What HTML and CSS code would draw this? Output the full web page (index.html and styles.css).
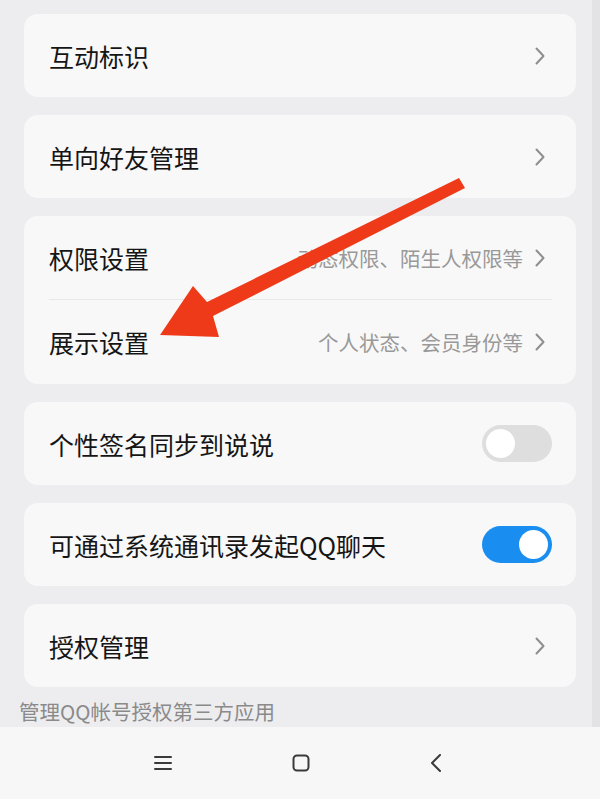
FILE: index.html
```html
<!DOCTYPE html>
<html lang="zh-CN">
<head>
  <meta charset="UTF-8">
  <title>设置</title>
  <link rel="stylesheet" href="styles.css">
</head>
<body>

  <!-- Settings list -->
  <div class="screen">
    <div class="list">
      <div class="card">
        <div class="row">
          <span class="label">互动标识</span>
          <span class="chev"><svg width="10" height="18" viewBox="0 0 10 18"><polyline points="1.5,1.5 8.5,9 1.5,16.5"/></svg></span>
        </div>
      </div>

      <div class="card">
        <div class="row">
          <span class="label">单向好友管理</span>
          <span class="chev"><svg width="10" height="18" viewBox="0 0 10 18"><polyline points="1.5,1.5 8.5,9 1.5,16.5"/></svg></span>
        </div>
      </div>

      <div class="card">
        <div class="row row-first">
          <span class="label">权限设置</span>
          <span class="hint">动态权限、陌生人权限等</span>
          <span class="chev"><svg width="10" height="18" viewBox="0 0 10 18"><polyline points="1.5,1.5 8.5,9 1.5,16.5"/></svg></span>
        </div>
        <div class="row row-second">
          <span class="label">展示设置</span>
          <span class="hint">个人状态、会员身份等</span>
          <span class="chev"><svg width="10" height="18" viewBox="0 0 10 18"><polyline points="1.5,1.5 8.5,9 1.5,16.5"/></svg></span>
        </div>
      </div>

      <div class="card">
        <div class="row">
          <span class="label">个性签名同步到说说</span>
          <span class="switch"><span class="knob"></span></span>
        </div>
      </div>

      <div class="card">
        <div class="row">
          <span class="label">可通过系统通讯录发起QQ聊天</span>
          <span class="switch on"><span class="knob"></span></span>
        </div>
      </div>

      <div class="card card-last">
        <div class="row">
          <span class="label">授权管理</span>
          <span class="chev"><svg width="10" height="18" viewBox="0 0 10 18"><polyline points="1.5,1.5 8.5,9 1.5,16.5"/></svg></span>
        </div>
      </div>

      <p class="note">管理QQ帐号授权第三方应用</p>
    </div>
    <div class="scrollbar"></div>
  </div>

  <!-- System nav -->
  <div class="navbar">
    <svg width="18" height="16" viewBox="0 0 18 16">
      <line x1="1" y1="2" x2="17" y2="2"/>
      <line x1="1" y1="8" x2="17" y2="8"/>
      <line x1="1" y1="14" x2="17" y2="14"/>
    </svg>
    <svg width="18" height="18" viewBox="0 0 18 18">
      <rect x="1.5" y="1.5" width="15" height="15" rx="3.5"/>
    </svg>
    <svg width="12" height="18" viewBox="0 0 12 18">
      <polyline points="10,1 2,9 10,17"/>
    </svg>
  </div>

  <!-- red annotation arrow drawn over the screenshot -->
  <svg class="arrow" width="600" height="799" viewBox="0 0 600 799">
    <polygon points="459,178 207,302 193,286 160,335 219,337 213,316 465,188"/>
  </svg>

</body>
</html>
```

FILE: styles.css
```css
body {
  margin: 0;
  font-family: "Noto Sans CJK SC", "Noto Sans", sans-serif;
  background-color: #ededf0;
  color: #151515;
  overflow: hidden;
}

.screen {
  display: flex;
  height: 727px;
  overflow: hidden;
}

.list {
  flex: 1;
  padding: 14px 16px 0 24px;
}

.scrollbar {
  width: 8px;
  background-color: #e3e3e6;
}

.card {
  background-color: #f8f8f8;
  border-radius: 14px;
  margin-bottom: 18px;
  padding: 0 31px 0 25px;
}

.card-last {
  margin-bottom: 12px;
}

.row {
  height: 83px;
  display: flex;
  align-items: center;
}

.row-first {
  height: 83px;
  border-bottom: 1px solid #e8e8e8;
  margin-right: -7px;
  padding-right: 7px;
}

.row-second {
  height: 84px;
}

.label {
  font-size: 25px;
  flex: 1;
  white-space: nowrap;
}

.hint {
  font-size: 20.5px;
  color: #999;
  margin-right: 12px;
}

.chev {
  display: flex;
  align-items: center;
}

.chev svg polyline {
  fill: none;
  stroke: #8e8e8e;
  stroke-width: 2;
  stroke-linecap: round;
  stroke-linejoin: round;
}

.switch {
  width: 70px;
  height: 37px;
  border-radius: 19px;
  background-color: #dedede;
  display: flex;
  align-items: center;
  padding: 0 4px;
  box-sizing: border-box;
  margin-right: -7px;
}

.switch .knob {
  width: 29px;
  height: 29px;
  border-radius: 50%;
  background-color: #fff;
}

.switch.on {
  background-color: #1a8df0;
  justify-content: flex-end;
}

.note {
  margin: 0 0 0 -5px;
  font-size: 20.5px;
  line-height: 24px;
  color: #8a8a8a;
}

.navbar {
  height: 72px;
  background-color: #f7f7f7;
  display: flex;
  align-items: center;
  justify-content: center;
  gap: 120px;
  padding-right: 4px;
  box-sizing: border-box;
}

.navbar svg line,
.navbar svg rect,
.navbar svg polyline {
  fill: none;
  stroke: #3a3a3a;
  stroke-width: 2;
  stroke-linecap: round;
  stroke-linejoin: round;
}

.arrow {
  position: absolute;
  top: 0;
  left: 0;
  pointer-events: none;
}

.arrow polygon {
  fill: #ef3a1a;
}
```
